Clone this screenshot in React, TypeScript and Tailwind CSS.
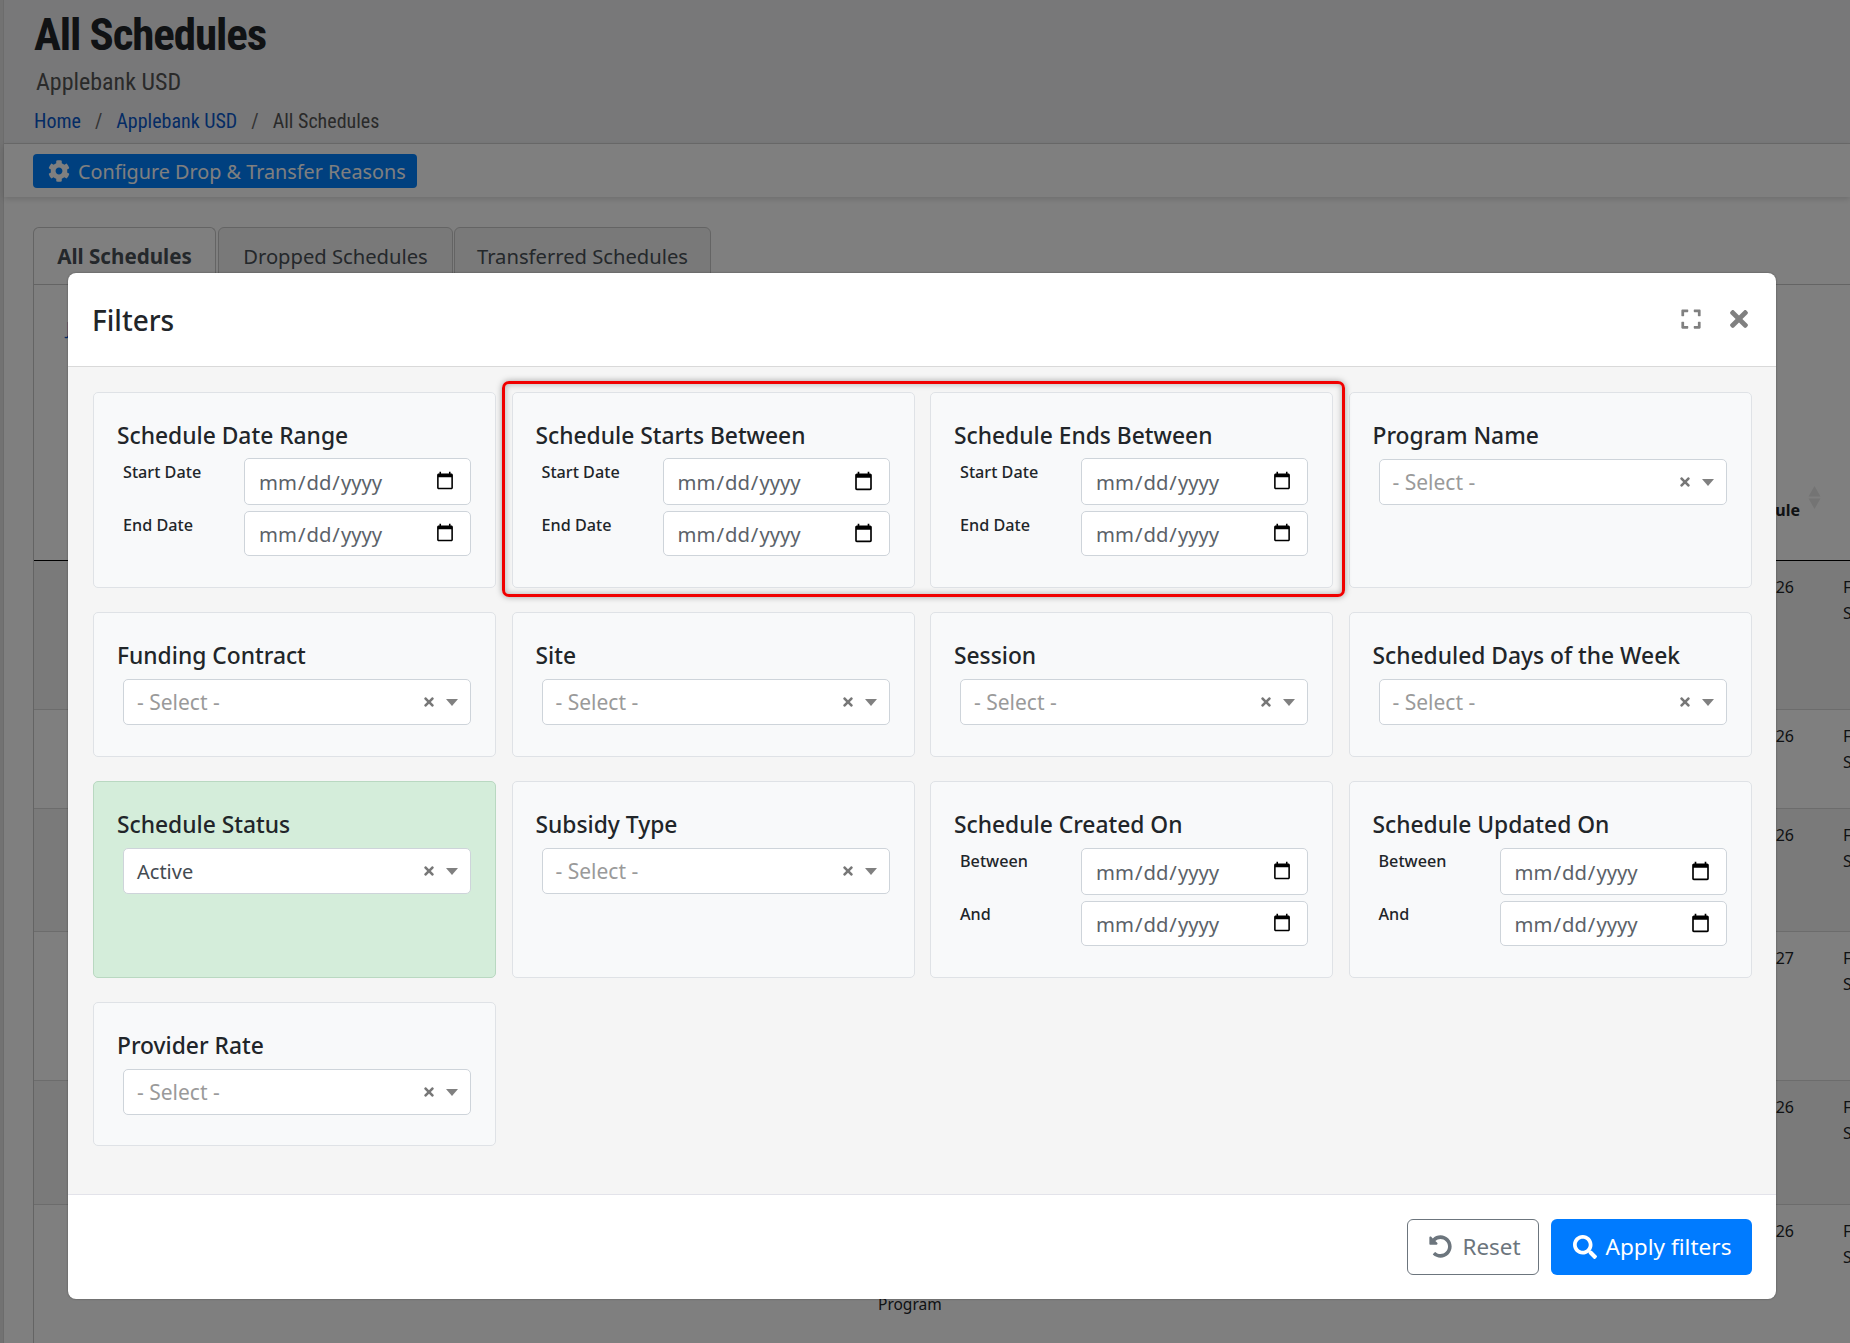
import { FaCog, FaExpand, FaSearch, FaTimes, FaUndoAlt } from "react-icons/fa"

const roboto = "font-['Roboto',sans-serif]"

function DateRow({ label, tall, low }: { label: string; tall?: boolean; low?: boolean }) {
    return (
        <div className="flex pl-[6px]">
            <label className={`w-[121px] text-[16.2px] leading-[24px] font-medium text-[#212529] ${low ? "pt-[1px]" : "pt-[2px]"}`}>{label}</label>
            <input
                type="date"
                className={`w-[227px] rounded-[5px] border border-[#ced4da] bg-white pl-[13px] pr-[13px] text-[20.25px] text-[#5b6269] [&::-webkit-datetime-edit]:pt-[2px] ${tall ? "h-[47px]" : "h-[45px]"}`}
            />
        </div>
    )
}

function DateCard({ title, first, second, low }: { title: string; first: string; second: string; low?: boolean }) {
    return (
        <Card title={title}>
            <div className={`flex flex-col gap-[6px] ${low ? "mt-[1px]" : ""}`}>
                <DateRow label={first} tall low={low} />
                <DateRow label={second} low={low} />
            </div>
        </Card>
    )
}

function SelectCard({ title, value, green }: { title: string; value?: string; green?: boolean }) {
    return (
        <Card title={title} green={green}>
            <div className="ml-[6px] mt-[1px] flex h-[46px] w-[348px] items-center rounded-[5px] border border-[#ced4da] bg-white pl-[13px] pr-[12px]">
                <span className={`flex-1 pt-[2px] ${value ? "text-[20px] text-[#444b52]" : "text-[21px] text-[#9a9a9a]"}`}>{value ?? "- Select -"}</span>
                <FaTimes className="mr-[12px] h-[14px] w-[10px] text-[#777]" />
                <svg width="12" height="7" viewBox="0 0 12 7" className="text-[#808080]">
                    <polygon points="0,0 12,0 6,7" fill="currentColor" />
                </svg>
            </div>
        </Card>
    )
}

function Card({ title, green, children }: { title: string; green?: boolean; children: React.ReactNode }) {
    return (
        <div className={`rounded-[5px] border px-[23px] pt-[23px] ${green ? "border-[#b9d8c1] bg-[#d4edda]" : "border-[#dfe2e6] bg-[#f8f9fa]"}`}>
            <h3 className="h-[42px] whitespace-nowrap text-[22.8px] leading-[40px] font-medium text-[#212529]">{title}</h3>
            {children}
        </div>
    )
}

const rows = [
    { h: "h-[149px]", stripe: true, date: "26" },
    { h: "h-[99px]", stripe: false, date: "26" },
    { h: "h-[123px]", stripe: true, date: "26" },
    { h: "h-[149px]", stripe: false, date: "27" },
    { h: "h-[124px]", stripe: true, date: "26" },
    { h: "h-[139px]", stripe: false, date: "26" },
]

export default function App() {
    return (
        <div className="relative h-[1343px] w-[1850px] overflow-hidden bg-[#e4e4e4] font-['Noto_Sans',sans-serif]">
            {/* page behind the dialog */}
            <div className="ml-[3px] border-l border-[#d8d8d8] bg-white">
                <div className={`h-[144px] border-b border-[#d5d5d5] bg-[#f0f1f3] ${roboto}`}>
                    <h1 className="pl-[30px] pt-[7px] text-[45px] leading-[56px] font-bold tracking-[-1.1px] text-[#212529] [font-stretch:75%]">All Schedules</h1>
                    <p className="pl-[32px] pt-[1px] text-[24px] leading-[36px] text-[#555] [font-stretch:75%]">Applebank USD</p>
                    <div className="flex pl-[30px] pt-[7px] text-[20px] leading-[28px] [font-stretch:75%]">
                        <span className="text-[#0a58ca]">Home</span>
                        <span className="px-[14px] text-[#666]">/</span>
                        <span className="text-[#0a58ca]">Applebank USD</span>
                        <span className="px-[14px] text-[#666]">/</span>
                        <span className="text-[#555]">All Schedules</span>
                    </div>
                </div>
                <div className="h-[53px] bg-[#ffffff] pl-[29px] pt-[10px] shadow-[0_2px_6px_rgba(0,0,0,0.15)]">
                    <button className="flex h-[34px] w-[384px] items-center gap-[8px] rounded-[4px] bg-[#0080ff] pl-[15px] text-[19.8px] text-white">
                        <FaCog className="h-[22px] w-[22px]" />
                        <span className="pt-[1px]">Configure Drop &amp; Transfer Reasons</span>
                    </button>
                </div>
                <div className="flex pl-[29px] pt-[30px] text-[20.2px]">
                    <div className="flex h-[57px] w-[183px] justify-center rounded-t-[6px] border border-b-0 border-[#c8c8c8] bg-white pt-[13px] text-[20.6px] font-bold text-[#495057]">All Schedules</div>
                    <div className="ml-[2px] flex h-[57px] w-[235px] justify-center rounded-t-[6px] border border-[#c8c8c8] bg-[#f2f2f2] pt-[13px] text-[#495057]">Dropped Schedules</div>
                    <div className="ml-[1px] flex h-[57px] w-[257px] justify-center rounded-t-[6px] border border-[#c8c8c8] bg-[#f2f2f2] pt-[13px] text-[#495057]">Transferred Schedules</div>
                </div>
                <div className="ml-[29px] border-l border-t border-[#c8c8c8]">
                    <div className="relative h-[276px] border-b border-black">
                        <span className="absolute left-[32px] top-[30px] text-[18px] text-[#0a58ca]">J</span>
                        <span className="absolute left-[1666px] top-[213px] w-[100px] text-right text-[16px] font-bold text-[#212529]">Schedule</span>
                        <svg width="13" height="23" viewBox="0 0 13 23" className="absolute left-[1774px] top-[201px] text-[#e8e8e8]">
                            <polygon points="6.5,0 12.5,10.5 0.5,10.5" fill="currentColor" />
                            <polygon points="0.5,12.5 12.5,12.5 6.5,23" fill="currentColor" />
                        </svg>
                    </div>
                    {rows.map((row, i) => (
                        <div key={i} className={`flex border-b border-[#d8d8d8] pl-[30px] pt-[13px] text-[16px] leading-[26px] text-[#212529] ${row.h} ${row.stripe ? "bg-[#f5f5f5]" : ""}`}>
                            <div className="relative w-[1730px] flex-none text-right">
                                {row.date}
                                {i === 5 && <span className="absolute left-[814px] top-[73px] text-[15.5px]">Program</span>}
                            </div>
                            <div className="ml-[49px] flex-none whitespace-nowrap">Full<br />School</div>
                        </div>
                    ))}
                </div>
            </div>
            <div className="absolute inset-0 bg-black/50" />

            {/* filters dialog */}
            <div className="absolute left-[68px] top-[273px] flex h-[1026px] w-[1708px] flex-col overflow-hidden rounded-[8px] bg-white shadow-[0_0_2px_rgba(0,0,0,0.4)]">
                <div className="flex h-[94px] flex-none items-center justify-between border-b border-[#d9d9d9] pb-[2px] pl-[24px] pr-[28px]">
                    <h2 className="pt-[2px] text-[28px] font-medium text-[#212529]">Filters</h2>
                    <div className="flex items-center gap-[28px] text-[#808080]">
                        <FaExpand className="h-[22px] w-[22px]" />
                        <FaTimes className="h-[26px] w-[18px]" />
                    </div>
                </div>
                <div className="grid flex-1 grid-cols-[403px_403px_403px_403px] content-start gap-x-[15.5px] gap-y-[24px] bg-[#f5f5f5] pl-[25px] pt-[25px]">
                    <div className="contents [&>*]:h-[196px]">
                        <DateCard title="Schedule Date Range" first="Start Date" second="End Date" />
                        <DateCard title="Schedule Starts Between" first="Start Date" second="End Date" />
                        <DateCard title="Schedule Ends Between" first="Start Date" second="End Date" />
                        <SelectCard title="Program Name" />
                    </div>
                    <div className="contents [&>*]:h-[145px]">
                        <SelectCard title="Funding Contract" />
                        <SelectCard title="Site" />
                        <SelectCard title="Session" />
                        <SelectCard title="Scheduled Days of the Week" />
                    </div>
                    <div className="contents [&>*]:h-[197px]">
                        <SelectCard title="Schedule Status" value="Active" green />
                        <SelectCard title="Subsidy Type" />
                        <DateCard title="Schedule Created On" first="Between" second="And" low />
                        <DateCard title="Schedule Updated On" first="Between" second="And" low />
                    </div>
                    <div className="contents [&>*]:h-[144px]">
                        <SelectCard title="Provider Rate" />
                    </div>
                </div>
                <div className="flex h-[105px] flex-none items-center justify-end gap-[12px] border-t border-[#e3e3ea] pb-[1px] pr-[24px]">
                    <button className="flex h-[56px] w-[132px] items-center justify-center gap-[11px] rounded-[6px] border border-[#6c757d] bg-white pl-[3px] text-[22.4px] text-[#6c757d]">
                        <FaUndoAlt className="h-[23px] w-[23px]" />
                        Reset
                    </button>
                    <button className="flex h-[56px] w-[201px] items-center justify-center gap-[9px] rounded-[6px] bg-[#007bff] pl-[1px] text-[22.6px] text-white">
                        <FaSearch className="h-[24px] w-[24px]" />
                        Apply filters
                    </button>
                </div>
            </div>

            {/* red annotation round the two date cards */}
            <div className="pointer-events-none absolute left-[502px] top-[381px] h-[216px] w-[843px] rounded-[7px] border-[3px] border-[#f00000] shadow-[0_0_6px_rgba(0,0,0,0.35),inset_0_0_6px_rgba(0,0,0,0.3)]" />
        </div>
    )
}
